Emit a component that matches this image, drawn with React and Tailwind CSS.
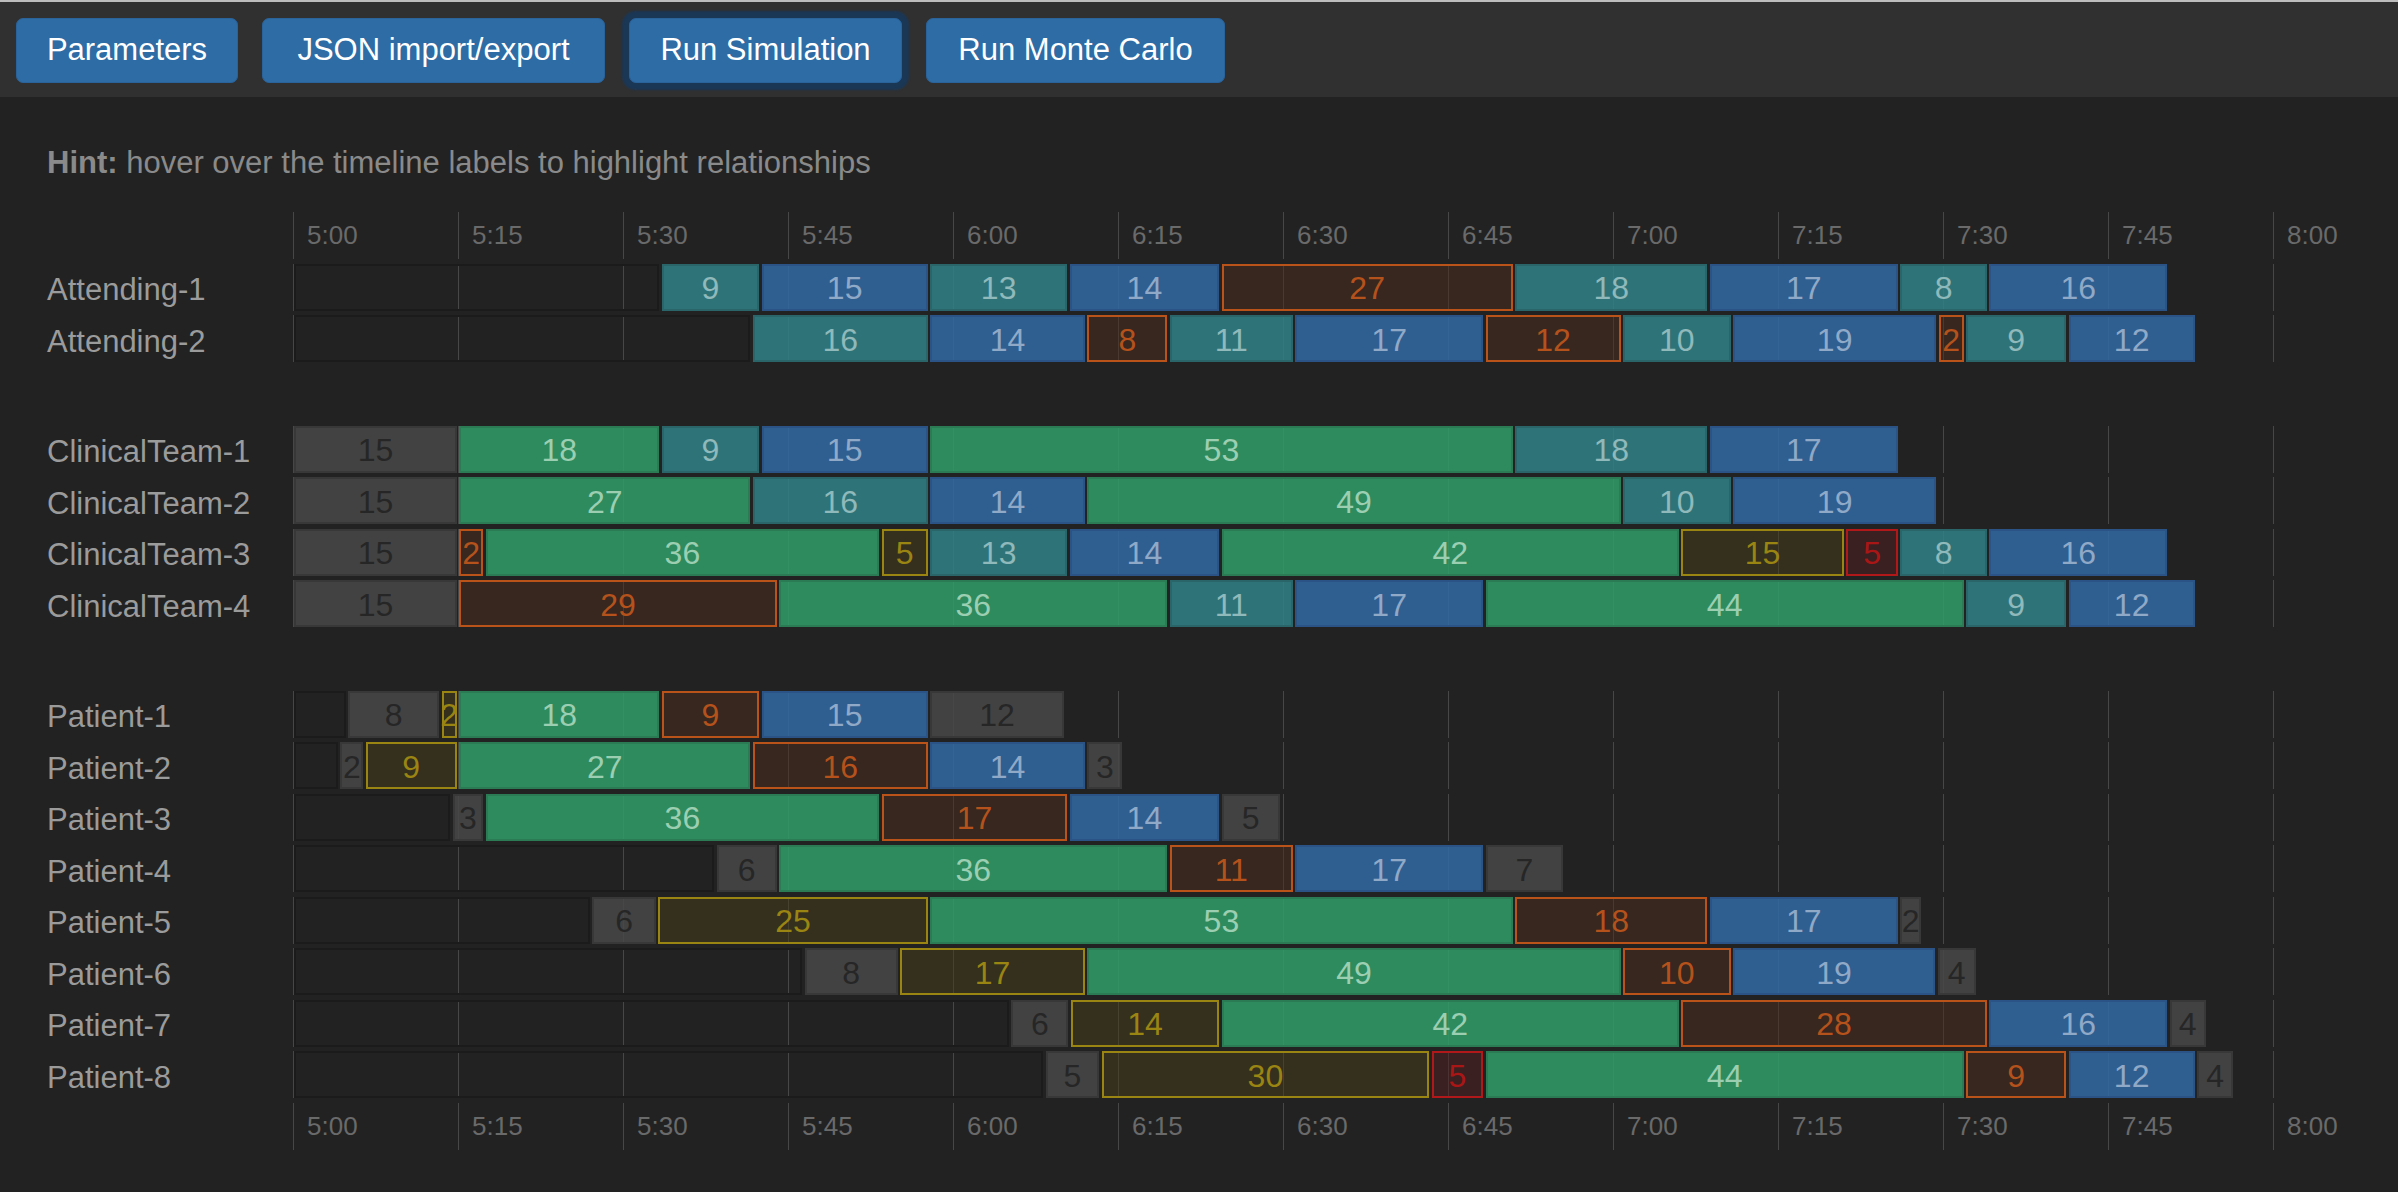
import React from 'react';

const PX_PER_MIN = 11;
const TICKS = ['5:00', '5:15', '5:30', '5:45', '6:00', '6:15', '6:30', '6:45', '7:00', '7:15', '7:30', '7:45', '8:00'];

// segment colours: e = idle, k = waiting, g = green, t = teal, b = blue, o/y/r = outlined
const TYPE = {
  e: 'border-[#1b1b1b]',
  k: 'bg-[#484848]/85 border-[#383838] text-[#262626]',
  g: 'bg-[#309d68]/85 border-[#2b7c54] text-[#9ccfb2]',
  t: 'bg-[#308187]/85 border-[#2a6569] text-[#8fb9ba]',
  b: 'bg-[#3169a5]/85 border-[#2b5386] text-[#8fa9c7]',
  o: 'bg-[#4e2c1c]/50 border-[#b9531a] text-[#b5521b]',
  y: 'bg-[#483e1a]/50 border-[#9a8412] text-[#9a8412]',
  r: 'bg-[#521e1e]/50 border-[#b0181a] text-[#aa1616]',
};

// each segment: [end minute (from 5:00), type, label]
const groups = [
  [
    { name: 'Attending-1', segs: [[33.4, 'e'], [42.5, 't', 9], [57.8, 'b', 15], [70.5, 't', 13], [84.3, 'b', 14], [111, 'o', 27], [128.7, 't', 18], [146, 'b', 17], [154.1, 't', 8], [170.5, 'b', 16]] },
    { name: 'Attending-2', segs: [[41.7, 'e'], [57.8, 't', 16], [72.1, 'b', 14], [79.6, 'o', 8], [91, 't', 11], [108.3, 'b', 17], [120.8, 'o', 12], [130.8, 't', 10], [149.5, 'b', 19], [152, 'o', 2], [161.3, 't', 9], [173, 'b', 12]] },
  ],
  [
    { name: 'ClinicalTeam-1', segs: [[15, 'k', 15], [33.4, 'g', 18], [42.5, 't', 9], [57.8, 'b', 15], [111, 'g', 53], [128.7, 't', 18], [146, 'b', 17]] },
    { name: 'ClinicalTeam-2', segs: [[15, 'k', 15], [41.7, 'g', 27], [57.8, 't', 16], [72.1, 'b', 14], [120.8, 'g', 49], [130.8, 't', 10], [149.5, 'b', 19]] },
    { name: 'ClinicalTeam-3', segs: [[15, 'k', 15], [17.4, 'o', 2], [53.4, 'g', 36], [57.8, 'y', 5], [70.5, 't', 13], [84.3, 'b', 14], [126.1, 'g', 42], [141.1, 'y', 15], [146, 'r', 5], [154.1, 't', 8], [170.5, 'b', 16]] },
    { name: 'ClinicalTeam-4', segs: [[15, 'k', 15], [44.1, 'o', 29], [79.6, 'g', 36], [91, 't', 11], [108.3, 'b', 17], [152, 'g', 44], [161.3, 't', 9], [173, 'b', 12]] },
  ],
  [
    { name: 'Patient-1', segs: [[4.9, 'e'], [13.4, 'k', 8], [15, 'y', 2], [33.4, 'g', 18], [42.5, 'o', 9], [57.8, 'b', 15], [70.2, 'k', 12]] },
    { name: 'Patient-2', segs: [[4.2, 'e'], [6.5, 'k', 2], [15, 'y', 9], [41.7, 'g', 27], [57.8, 'o', 16], [72.1, 'b', 14], [75.5, 'k', 3]] },
    { name: 'Patient-3', segs: [[14.4, 'e'], [17.4, 'k', 3], [53.4, 'g', 36], [70.5, 'o', 17], [84.3, 'b', 14], [89.8, 'k', 5]] },
    { name: 'Patient-4', segs: [[38.4, 'e'], [44.1, 'k', 6], [79.6, 'g', 36], [91, 'o', 11], [108.3, 'b', 17], [115.6, 'k', 7]] },
    { name: 'Patient-5', segs: [[27.1, 'e'], [33.1, 'k', 6], [57.8, 'y', 25], [111, 'g', 53], [128.7, 'o', 18], [146, 'b', 17], [148.1, 'k', 2]] },
    { name: 'Patient-6', segs: [[46.4, 'e'], [55.1, 'k', 8], [72.1, 'y', 17], [120.8, 'g', 49], [130.8, 'o', 10], [149.4, 'b', 19], [153.1, 'k', 4]] },
    { name: 'Patient-7', segs: [[65.2, 'e'], [70.6, 'k', 6], [84.3, 'y', 14], [126.1, 'g', 42], [154.1, 'o', 28], [170.5, 'b', 16], [174, 'k', 4]] },
    { name: 'Patient-8', segs: [[68.3, 'e'], [73.4, 'k', 5], [103.4, 'y', 30], [108.3, 'r', 5], [152, 'g', 44], [161.3, 'o', 9], [173, 'b', 12], [176.5, 'k', 4]] },
  ],
];

const GridLines = () =>
  TICKS.map((t, i) => (
    <div key={t} className="absolute top-0 h-full w-px bg-[#474747]" style={{ left: i * 15 * PX_PER_MIN }} />
  ));

const AxisRow = () => (
  <div className="flex h-[47px]">
    <div className="w-[246px] shrink-0" />
    <div className="relative w-[1981px] h-full">
      <GridLines />
      {TICKS.map((t, i) => (
        <span
          key={t}
          className="absolute top-0 h-full flex items-center text-[26px] text-[#6a6a6a]"
          style={{ left: i * 15 * PX_PER_MIN + 14 }}
        >
          {t}
        </span>
      ))}
    </div>
  </div>
);

const TimelineRow = ({ row, first }) => {
  let start = 0;
  const boxes = row.segs.map(([end, type, label], idx) => {
    const left = start * PX_PER_MIN + 1.25;
    const width = (end - start) * PX_PER_MIN - 2.5;
    start = end;
    return (
      <div
        key={idx}
        className={`absolute top-0 h-full border-2 flex items-center justify-center whitespace-nowrap pt-[2px] text-[32px] ${TYPE[type]}`}
        style={{ left, width }}
      >
        {label}
      </div>
    );
  });

  return (
    <div className={`flex items-center h-[47px] ${first ? 'mt-[59px]' : ''}`}>
      <div className="w-[246px] shrink-0 mt-[7px] text-[31px] text-[#9b9b9b]">{row.name}</div>
      <div className="relative w-[1981px] h-full">
        <GridLines />
        {boxes}
      </div>
    </div>
  );
};

const App = () => {
  return (
    <div className="min-h-screen bg-[#222222] font-['Liberation_Sans',Arial,sans-serif]">
      <div className="h-[97px] bg-[#303030] border-t-2 border-[#bdbdbd] flex items-center gap-6 pl-4 pt-[2px]">
        <button className="w-[222px] h-[65px] rounded-[7px] bg-[#2d6ca5] border border-[#2a629a] text-white text-[31px]">
          Parameters
        </button>
        <button className="w-[343px] h-[65px] rounded-[7px] bg-[#2d6ca5] border border-[#2a629a] text-white text-[31px]">
          JSON import/export
        </button>
        <button className="w-[273px] h-[65px] rounded-[7px] bg-[#2d6ca5] border border-[#2a629a] text-white text-[31px] shadow-[0_0_2px_7px_#1b3756]">
          Run Simulation
        </button>
        <button className="w-[299px] h-[65px] rounded-[7px] bg-[#2d6ca5] border border-[#2a629a] text-white text-[31px]">
          Run Monte Carlo
        </button>
      </div>

      <div className="pl-[47px] pt-[46px] pb-[40px]">
        <p className="text-[31px] leading-[40px] text-[#8a8a8a]">
          <b>Hint:</b> hover over the timeline labels to highlight relationships
        </p>

        <div className="mt-[29px] flex flex-col gap-[4.5px]">
          <AxisRow />
          {groups.map((group, gi) =>
            group.map((row, ri) => <TimelineRow key={row.name} row={row} first={ri === 0 && gi > 0} />)
          )}
          <AxisRow />
        </div>
      </div>
    </div>
  );
};

export default App;
